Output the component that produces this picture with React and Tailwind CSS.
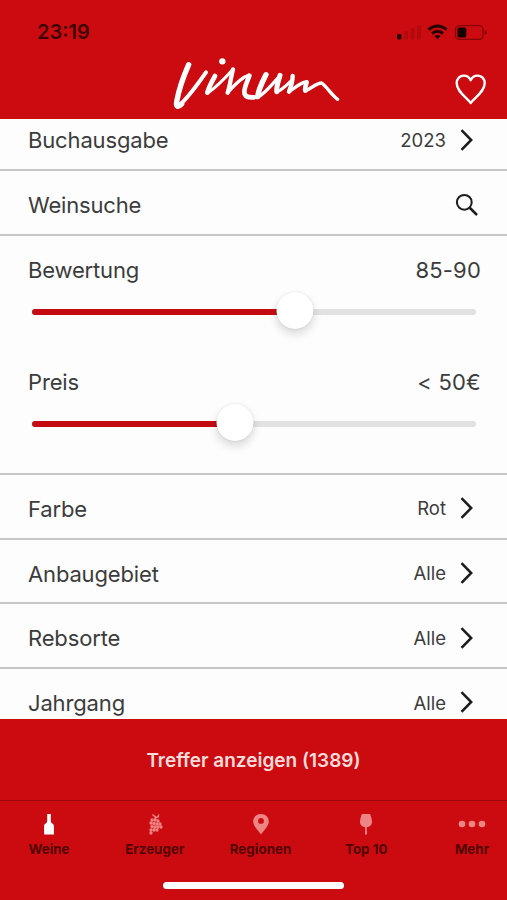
import { useState } from "react";

const filters = [
  { label: "Farbe", value: "Rot" },
  { label: "Anbaugebiet", value: "Alle" },
  { label: "Rebsorte", value: "Alle" },
  { label: "Jahrgang", value: "Alle" },
];

function Chevron() {
  return (
    <svg width="16" height="24" viewBox="0 0 16 24" fill="none" className="ml-[13px] mr-[6px]">
      <path d="M2.5 2.2 L12.2 12 L2.5 21.8" stroke="#1c1c1c" strokeWidth="2.5" />
    </svg>
  );
}

function Row({ label, value }) {
  return (
    <div className="flex h-[64.7px] shrink-0 items-center justify-between border-b-2 border-[#c6c6c6] pl-7 pr-[26px] pt-[4px]">
      <span className="pt-[2px] text-[22px] tracking-[-0.15px]">{label}</span>
      <span className="flex items-center text-[18.5px]">
        <span className="pt-[2px]">{value}</span>
        <Chevron />
      </span>
    </div>
  );
}

function Slider({ label, text, percent }) {
  return (
    <div className="h-28">
      <div className="flex h-[70px] items-center justify-between pl-7 pr-[26px]">
        <span className="text-[22px] tracking-[-0.17px]">{label}</span>
        <span className="text-[22px] tracking-[0.2px]">{text}</span>
      </div>
      <div className="relative ml-8 mr-[31px] mt-1 h-[6px] rounded-full bg-[#e2e2e2]">
        <div className="h-full rounded-full bg-[#c50b12]" style={{ width: `${percent}%` }} />
        <div
          className="absolute -top-[17px] size-[37px] -translate-x-1/2 rounded-full bg-white shadow-[0_5px_10px_rgba(0,0,0,0.15),0_0_2px_rgba(0,0,0,0.12)]"
          style={{ left: `${percent}%` }}
        />
      </div>
    </div>
  );
}

function StatusIcons() {
  return (
    <svg width="94" height="20" viewBox="0 0 94 20">
      <rect x="1" y="13" width="4.5" height="5.5" rx="1.4" fill="#260000" />
      <g fill="#b30a0e">
        <rect x="8" y="10" width="4" height="8.5" rx="1" />
        <rect x="14.5" y="7" width="4" height="11.5" rx="1" />
        <rect x="21" y="4" width="4" height="14.5" rx="1" />
      </g>
      <g fill="none" stroke="#260000" strokeWidth="2.9">
        <path d="M32.4 8.7 Q41.5 1.3 50.6 8.7" />
        <path d="M36 12.5 Q41.5 8.2 47 12.5" />
      </g>
      <path d="M38.4 15.1 Q41.5 12.8 44.6 15.1 L41.5 18.4 Z" fill="#260000" />
      <rect x="59.5" y="4.7" width="27.5" height="13.6" rx="3.6" fill="none" stroke="#860509" strokeWidth="1.3" />
      <rect x="61.5" y="6.5" width="8.8" height="10" rx="1.7" fill="#160000" />
      <path d="M88.5 9 Q91 10 91 11.5 Q91 13 88.5 14 Z" fill="#860509" />
    </svg>
  );
}

function Logo() {
  return (
    <svg
      width="190"
      height="65"
      viewBox="0 0 570 195"
      fill="none"
      stroke="#fff"
      strokeLinecap="round"
      strokeLinejoin="round"
      role="img"
      aria-label="Vinum"
      className="absolute left-[160px] top-[50px]"
    >
      <path d="M86 44 C70 80 56 122 50 155 C47 171 55 173 65 162" strokeWidth="16" />
      <path d="M55 168 C84 145 112 103 138 67" strokeWidth="12" />
      <path d="M165 78 C156 94 147 110 142 128" strokeWidth="14" />
      <path d="M142 130 C168 112 194 86 217 60" strokeWidth="9" />
      <path d="M219 58 C213 82 210 105 203 128" strokeWidth="13" />
      <path d="M203 128 C220 108 244 82 266 76" strokeWidth="10" />
      <path d="M268 77 C262 95 249 118 254 132 C259 144 270 142 282 142" strokeWidth="14" />
      <path d="M318 74 C308 94 295 118 293 140" strokeWidth="16" />
      <path d="M295 141 C318 128 338 100 360 78" strokeWidth="10" />
      <path d="M360 76 C356 92 349 108 350 125" strokeWidth="15" />
      <path d="M352 126 C370 116 384 102 398 88" strokeWidth="9" />
      <path d="M398 78 C398 95 393 110 387 125" strokeWidth="13" />
      <path d="M388 125 C404 114 421 97 438 96" strokeWidth="10" />
      <path d="M440 97 C437 106 434 114 436 122" strokeWidth="14" />
      <path d="M437 122 C453 116 468 100 485 99 C502 112 515 135 533 148" strokeWidth="10" />
      <circle cx="187" cy="34" r="9.5" fill="#fff" stroke="none" />
    </svg>
  );
}

function Bottle() {
  return (
    <svg width="24" height="22" viewBox="0 0 24 22" fill="#fff">
      <path d="M10.2 1 h3.6 v7.2 c0 1.8 3.1 2.2 3.1 5 v8.2 h-9.8 v-8.2 c0-2.8 3.1-3.2 3.1-5 Z" />
    </svg>
  );
}

function Grapes() {
  const dots = [
    [9, 7], [12, 7], [15, 8],
    [8, 10], [11, 10.5], [14, 11], [17, 11],
    [9, 13.5], [12, 14], [15, 14], [18, 14],
    [8, 17], [11, 17], [14, 17], [8, 20],
  ];
  return (
    <svg width="24" height="22" viewBox="0 0 24 22">
      <path d="M9.5 1.5 C12 4 13 5 16 3.5 M12 4 L13 7 M16 1.5 L14 5" stroke="#ed8585" strokeWidth="1.4" fill="none" />
      {dots.map(([x, y]) => (
        <circle key={`${x}-${y}`} cx={x} cy={y} r="1.65" fill="#ed8585" />
      ))}
    </svg>
  );
}

function Pin() {
  return (
    <svg width="24" height="22" viewBox="0 0 24 22" fill="#ed8585">
      <path fillRule="evenodd" d="M12 1 C7.5 1 4.2 4.2 4.2 8.4 C4.2 12.8 9 17.2 12 21.5 C15 17.2 19.8 12.8 19.8 8.4 C19.8 4.2 16.5 1 12 1 Z M12 5 a2.9 2.9 0 1 1 0 5.8 a2.9 2.9 0 1 1 0-5.8 Z" />
    </svg>
  );
}

function Glass() {
  return (
    <svg width="24" height="22" viewBox="0 0 24 22" fill="#ed8585">
      <path d="M7.8 1 h8.4 c.8 3 1.8 5.3 1.8 8 c0 3-2.5 4.9-5.2 5.3 l.2 7.2 h-2 l.2-7.2 C8.5 13.9 6 12 6 9 c0-2.7 1-5 1.8-8 Z" />
    </svg>
  );
}

function Dots() {
  return (
    <svg width="28" height="22" viewBox="0 0 28 22" fill="#ed8585">
      <circle cx="4" cy="11" r="3.3" />
      <circle cx="14" cy="11" r="3.3" />
      <circle cx="24" cy="11" r="3.3" />
    </svg>
  );
}

const tabs = [
  { name: "Weine", Icon: Bottle },
  { name: "Erzeuger", Icon: Grapes },
  { name: "Regionen", Icon: Pin },
  { name: "Top 10", Icon: Glass },
  { name: "Mehr", Icon: Dots },
];

export default function App() {
  const [active, setActive] = useState("Weine");

  return (
    <div className="flex h-[900px] w-[507px] flex-col overflow-hidden bg-[#fdfdfd] font-['Inter',sans-serif] text-[#3c3c3c]">
      <header className="relative h-[119px] shrink-0 bg-[#cc0b10]">
        <div className="flex items-start justify-between pl-[37px] pr-[17px] pt-[21px]">
          <span className="text-[20px] font-semibold leading-[22px] text-[#3f0204]">23:19</span>
          <StatusIcons />
        </div>
        <Logo />
        <svg width="34" height="34" viewBox="0 0 34 34" fill="none" className="absolute left-[454px] top-[72px]">
          <path
            d="M16.7 31 C12 25 2.7 19.5 2.7 11.3 C2.7 6.5 6 3.6 9.7 3.6 C13 3.6 15.5 5.5 16.7 8.2 C17.9 5.5 20.4 3.6 23.7 3.6 C27.4 3.6 30.7 6.5 30.7 11.3 C30.7 19.5 21.4 25 16.7 31 Z"
            stroke="#fff"
            strokeWidth="2.4"
            strokeLinejoin="round"
          />
        </svg>
      </header>

      <main className="flex h-[600px] shrink-0 flex-col justify-start overflow-hidden">
        <div className="-mt-[12.7px] shrink-0">
          <Row label="Buchausgabe" value="2023" />
        </div>
        <div className="flex h-[65px] shrink-0 items-center justify-between border-b-2 border-[#c6c6c6] pl-7 pr-[28px] pt-[4px]">
          <span className="pt-[2px] text-[22px] tracking-[-0.17px]">Weinsuche</span>
          <svg width="24" height="24" viewBox="0 0 24 24" fill="none" stroke="#1c1c1c">
            <circle cx="9.3" cy="9.3" r="7.4" strokeWidth="2" />
            <path d="M14.5 14.5 L22 22" strokeWidth="2.5" />
          </svg>
        </div>
        <div className="-mt-px h-[240px] shrink-0 border-b-2 border-[#c6c6c6]">
          <Slider label="Bewertung" text="85-90" percent={59.2} />
          <Slider label="Preis" text="< 50€" percent={45.8} />
        </div>
        {filters.map((f) => (
          <Row key={f.label} label={f.label} value={f.value} />
        ))}
      </main>

      <button className="h-[82px] shrink-0 border-b border-[#a0070b] bg-[#cc0b10] pt-[4px] text-[19px] font-semibold text-[#fbdcdc]">
        Treffer anzeigen (1389)
      </button>

      <nav className="-mr-[5px] flex h-[83px] shrink-0 justify-between bg-[#cc0b10] pl-[9px]">
        {tabs.map(({ name, Icon }) => (
          <button
            key={name}
            onClick={() => setActive(name)}
            aria-pressed={active === name}
            className="flex w-20 flex-col items-center pt-[12px] text-[13.4px] font-bold leading-[16px] text-[#520204]"
          >
            <Icon />
            <span className="mt-[6px]">{name}</span>
          </button>
        ))}
      </nav>
      <div className="flex flex-1 justify-center bg-[#cc0b10]">
        <div className="-mt-[2px] h-[7px] w-[181px] rounded-full bg-white" />
      </div>
    </div>
  );
}
